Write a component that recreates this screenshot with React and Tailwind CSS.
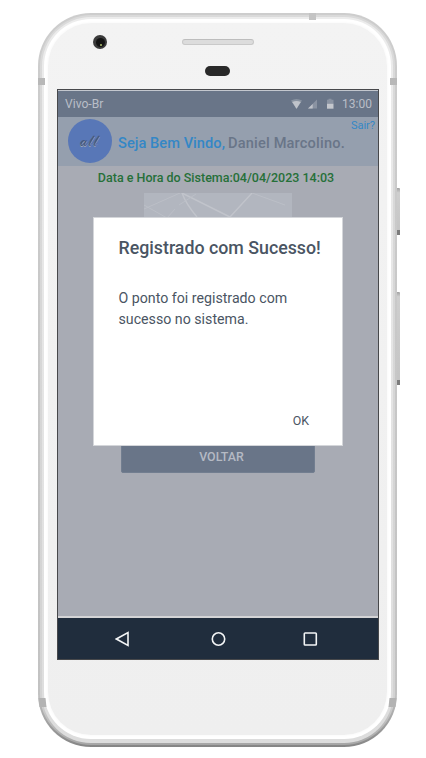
function Bezel({ children }) {
  return (
    <div className="h-[734px] w-[359px] rounded-[53px] bg-linear-to-b from-[#cdcdcd] via-[#c2c2c2] via-93% to-[#858585] p-[2px]">
      <div className="h-full w-full rounded-[51px] bg-linear-to-b from-[#dadada] via-[#d3d3d3] via-94% to-[#a6a6a6] p-[2px]">
        <div className="h-full w-full rounded-[49px] bg-linear-to-b from-[#ececec] to-[#dddddd] px-[2px] pt-[2px] pb-[4px]">
          <div className="h-full w-full rounded-[47px] bg-white p-[4px]">
            <div className="h-full w-full rounded-[43px] bg-linear-to-b from-[#f3f3f3] to-[#efefef] px-[9px] pt-[15px] shadow-[0_0_2px_1px_#fbfbfb]">
              {children}
            </div>
          </div>
        </div>
      </div>
    </div>
  );
}

function PhoneTop() {
  return (
    <div className="h-[51px] pt-[1px]">
      <div className="flex items-start">
        <div className="-mt-[4px] ml-[36px] flex h-[14px] w-[14px] items-center justify-center rounded-full bg-[#3b3b3b]">
          <div className="flex h-[9px] w-[9px] items-end justify-center rounded-full bg-[#141414] pb-[1px] pl-[1px]">
            <div className="h-[2px] w-[2px] bg-[#8a9758]" />
          </div>
        </div>
        <div className="ml-[75px] h-[6px] w-[72px] rounded-full border border-[#c9c9c9] border-t-[#bdbdbd] bg-[#dcdcdc]" />
      </div>
      <div className="mt-[17px] ml-[148px] h-[10px] w-[25px] rounded-full bg-[#292929]" />
    </div>
  );
}

function StatusBar() {
  return (
    <div className="flex h-[27px] items-center border-t border-[#c3c7ce] bg-[#697588] px-[7px] text-[12px] text-[#b9bec7]">
      <span className="text-[12.1px]">Vivo-Br</span>
      <svg className="ml-auto" width="44" height="12" viewBox="0 0 44 12">
        <path d="M0 2.6Q5.5-.8 11 2.6L5.5 11Z" fill="#8993a1" />
        <path d="M1.2 4Q5.5 2 9.8 4L5.5 10.8Z" fill="#bfc3ca" />
        <path d="M17 10.6H26V1.6Z" fill="#8a93a2" />
        <path d="M17 10.6H21.7V5.9Z" fill="#bfc3ca" />
        <path d="M37.5.7H40.5V1.8H42.5V5.7H36V1.8H37.5Z" fill="#8a93a2" />
        <path d="M36 5.7H42.5V10.7H36Z" fill="#c4c7cd" />
      </svg>
      <span className="-mr-[1px] ml-[7px]">13:00</span>
    </div>
  );
}

function Header() {
  return (
    <div className="flex h-[49px] bg-[#959fae]">
      <div className="mt-[2px] ml-[10px] flex h-[44px] w-[44px] shrink-0 items-center justify-center rounded-full bg-[#5877b7]">
        <span className="-ml-[2px] text-[14px] leading-none text-[#46577c] [text-shadow:0_1px_0_#a0a8b4]">
          𝒶𝓁𝓁
        </span>
      </div>
      <p className="mt-[16px] ml-[6px] flex text-[14.6px] leading-[21px] font-medium whitespace-nowrap text-[#3487c6]">
        <span className="tracking-[0.05px]">Seja Bem Vindo,</span>
        <span className="ml-[3px] tracking-[0.18px] text-[#697588]">Daniel Marcolino.</span>
      </p>
      <span className="mt-[1px] mr-[3px] ml-auto text-[11px] leading-[15px] whitespace-nowrap text-[#3487c6]">
        <span className="-ml-[24px]">Sair?</span>
      </span>
    </div>
  );
}

function NavBar() {
  return (
    <div className="flex h-[41px] items-center bg-[#202d3d] pl-[57px]">
      <svg width="204" height="16" viewBox="0 0 204 16" fill="none" stroke="#f3f5f6" strokeWidth="1.6">
        <path d="M13 1.6V14.4L1.4 8Z" />
        <circle cx="103.5" cy="8" r="6.2" />
        <rect x="189.3" y="2" width="12" height="12" rx="0.8" />
      </svg>
    </div>
  );
}

function Dialog() {
  return (
    <div className="absolute top-[127px] left-[35px] flex h-[229px] w-[250px] flex-col border border-[#d4d6da] bg-white pl-[24.5px] text-[#4a5563]">
      <h1 className="mt-[18px] text-[17.8px] leading-[24px] font-medium whitespace-nowrap">Registrado com Sucesso!</h1>
      <p className="mt-[28px] text-[14.2px] leading-[20.5px]">
        O ponto foi registrado com
        <br />
        sucesso no sistema.
      </p>
      <button className="mt-auto mr-[33px] mb-[16px] self-end text-[12.4px] leading-[16px]">OK</button>
    </div>
  );
}

export default function App() {
  return (
    <div className="relative h-[758px] w-[426px] overflow-hidden bg-white pt-[13px] pl-[38px] font-['Roboto','Liberation_Sans',sans-serif]">
      <Bezel>
        <PhoneTop />
        <div className="relative h-[571px] w-[322px] border border-[#47484b] bg-[#a8abb4]">
          <StatusBar />
          <Header />
          <p className="h-[27px] pt-[3px] text-center text-[12.5px] leading-[18px] font-medium whitespace-nowrap text-[#267039]">
            <span className="-ml-[4px]">Data e Hora do Sistema:04/04/2023 14:03</span>
          </p>
          <svg className="ml-[86px] bg-[#b2b6bf]" width="148" height="60" viewBox="0 0 148 60" fill="none" stroke="#c1c4cb" strokeWidth="1.4">
            <path d="M38 0Q42 11 53 24" />
            <path d="M38 0L86 24M108 0L86 24L78 34" />
            <path d="M0 12L23 25L31 16M35 12L52 1M36 0L0 16M108 0L141 12" strokeWidth="0.9" stroke="#bcc0c7" />
          </svg>
          <div className="mt-[88px] ml-[63px] flex h-[132px] w-[194px] items-end">
            <div className="flex h-[33px] w-full items-center justify-center rounded-[2px] border border-[#727e90] bg-[#697588] pt-[2px] pl-[7px] text-[12.4px] font-medium text-[#b5bac4]">
              VOLTAR
            </div>
          </div>
          <div className="mt-[143px] h-[2px] bg-[#d4d4d6]" />
          <NavBar />
          <Dialog />
        </div>
      </Bezel>
      <div className="absolute top-[13px] left-[309px] h-[7px] w-[7px] bg-[#c4c4c4]" />
      <div className="absolute top-[78px] left-[38px] h-[7px] w-[7px] bg-[#b8b8b8]" />
      <div className="absolute top-[78px] left-[390px] h-[7px] w-[7px] bg-[#b8b8b8]" />
      <div className="absolute top-[698px] left-[39px] h-[9px] w-[7px] skew-x-6 bg-[#b3b3b3]" />
      <div className="absolute top-[698px] left-[389px] h-[9px] w-[7px] -skew-x-6 bg-[#b3b3b3]" />
      <div className="absolute top-[188px] left-[397px] flex h-[47px] w-[3px] flex-col justify-end rounded-r-[1px] bg-linear-to-b from-[#a2a2a2] via-[#cecece] via-10% to-[#c4c4c4]">
        <div className="h-[5px] bg-[#7c7c7c]" />
      </div>
      <div className="absolute top-[292px] left-[397px] flex h-[93px] w-[3px] flex-col justify-end rounded-r-[1px] bg-linear-to-b from-[#a2a2a2] via-[#cecece] via-5% to-[#c4c4c4]">
        <div className="h-[5px] bg-[#7c7c7c]" />
      </div>
    </div>
  );
}
